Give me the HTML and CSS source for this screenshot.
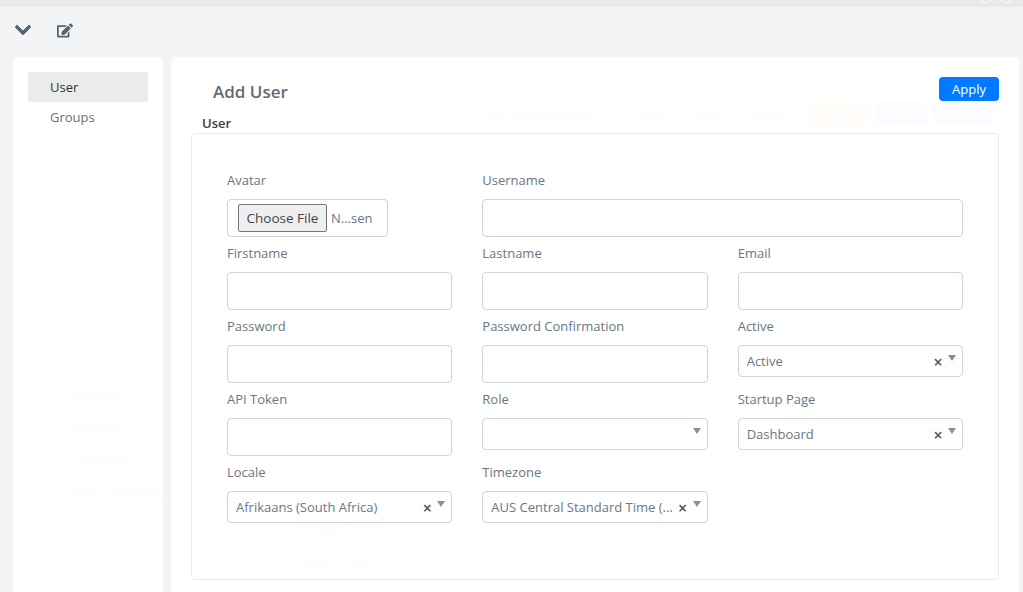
FILE: index.html
```html
<!DOCTYPE html>
<html lang="en">
<head>
<meta charset="UTF-8">
<title>Add User</title>
<link rel="stylesheet" href="styles.css">
</head>
<body>

<div class="topstrip">
	<span class="dot faint"></span>
	<span class="dot"></span>
	<span class="dot"></span>
</div>

<div class="toolbar">
	<svg class="icon-down" viewBox="0 0 448 512"><path d="M207.029 381.476L12.686 187.132c-9.373-9.373-9.373-24.569 0-33.941l22.667-22.667c9.357-9.357 24.522-9.375 33.901-.04L224 284.505l154.745-154.021c9.379-9.335 24.544-9.317 33.901.04l22.667 22.667c9.373 9.373 9.373 24.569 0 33.941L240.971 381.476c-9.373 9.372-24.569 9.372-33.942 0z"/></svg>
	<svg class="icon-edit" viewBox="0 0 576 512"><path d="M402.6 83.2l90.2 90.2c3.8 3.8 3.8 10 0 13.8L274.4 405.6l-92.8 10.3c-12.4 1.4-22.9-9.1-21.5-21.5l10.3-92.8L388.8 83.2c3.8-3.8 10-3.8 13.8 0zm162-22.9l-48.8-48.8c-15.2-15.2-39.9-15.2-55.2 0l-35.4 35.4c-3.8 3.8-3.8 10 0 13.8l90.2 90.2c3.8 3.8 10 3.8 13.8 0l35.4-35.4c15.2-15.3 15.2-40 0-55.2zM384 346.2V448H64V128h229.8c3.2 0 6.2-1.3 8.5-3.5l40-40c7.6-7.6 2.2-20.5-8.5-20.5H48C21.5 64 0 85.5 0 112v352c0 26.5 21.5 48 48 48h352c26.5 0 48-21.5 48-48V306.2c0-10.7-12.9-16-20.5-8.5l-40 40c-2.2 2.3-3.5 5.3-3.5 8.5z"/></svg>
</div>

<div class="layout">
	<div class="sidebar">
		<div class="nav-item active">User</div>
		<div class="nav-item">Groups</div>

		<!-- the page underneath shows through very faintly -->
		<div class="ghost-side">
			<div>Urgency</div>
			<div>Medium</div>
			<div>Contract</div>
			<div>Select Contract</div>
		</div>
	</div>

	<div class="main">
		<div class="ghost-bar">
			<span>Print Worklog Report</span>
			<span>Close</span>
			<span>Back</span>
			<span>Reset</span>
			<span class="ghost-btn orange">Delete</span>
			<span class="ghost-btn blue save">Save</span>
			<span class="ghost-btn blue apply">Apply</span>
		</div>

		<div class="head">
			<h1>Add User</h1>
			<button class="btn-apply">Apply</button>
		</div>
		<div class="section-title">User</div>

		<div class="card">
			<div class="form">
				<div class="field">
					<label>Avatar</label>
					<div class="file">
						<button>Choose File</button>
						<span>N...sen</span>
					</div>
				</div>
				<div class="field span2">
					<label>Username</label>
					<input class="text" type="text">
				</div>

				<div class="field">
					<label>Firstname</label>
					<input class="text" type="text">
				</div>
				<div class="field">
					<label>Lastname</label>
					<input class="text" type="text">
				</div>
				<div class="field">
					<label>Email</label>
					<input class="text" type="text">
				</div>

				<div class="field">
					<label>Password</label>
					<input class="text" type="password">
				</div>
				<div class="field">
					<label>Password Confirmation</label>
					<input class="text" type="password">
				</div>
				<div class="field">
					<label>Active</label>
					<div class="select">
						<span class="value">Active</span>
						<span class="clear">&times;</span>
						<span class="caret"></span>
					</div>
				</div>

				<div class="field">
					<label>API Token</label>
					<input class="text" type="text">
				</div>
				<div class="field">
					<label>Role</label>
					<div class="select">
						<span class="value"></span>
						<span class="caret"></span>
					</div>
				</div>
				<div class="field">
					<label>Startup Page</label>
					<div class="select">
						<span class="value">Dashboard</span>
						<span class="clear">&times;</span>
						<span class="caret"></span>
					</div>
				</div>

				<div class="field">
					<label>Locale</label>
					<div class="select">
						<span class="value">Afrikaans (South Africa)</span>
						<span class="clear">&times;</span>
						<span class="caret"></span>
					</div>
				</div>
				<div class="field">
					<label>Timezone</label>
					<div class="select">
						<span class="value">AUS Central Standard Time (...</span>
						<span class="clear">&times;</span>
						<span class="caret"></span>
					</div>
				</div>
			</div>

			<div class="ghost-card">
				<div>Requester</div>
				<div>Select User</div>
			</div>
		</div>
	</div>
</div>

</body>
</html>
```

FILE: styles.css
```css
* {
	box-sizing: border-box;
	margin: 0;
	padding: 0;
}
html, body {
	background: #f3f4f6;
	color: #5f6b76;
	height: 100%;
	overflow: hidden;
}
body {
	font-family: "Open Sans", "Noto Sans", sans-serif;
	font-size: 13px;
}

.topstrip {
	height: 7px;
	background: #e9e9e9;
	position: relative;
}
.dot {
	position: absolute;
	top: -13px;
	left: 977px;
	width: 16px;
	height: 16px;
	border-radius: 50%;
	background: #e9e9e9;
	border: 1px solid #fff;
}
.dot:nth-child(3) {
	left: 999px;
}
.dot.faint {
	top: -7px;
	left: 948px;
	width: 19px;
	height: 19px;
	background: none;
	border: 1px solid #eeeeef;
}

.toolbar {
	height: 50px;
	display: flex;
	align-items: center;
	gap: 26px;
	padding: 0 0 4px 15px;
}
.icon-down {
	width: 16px;
	height: 18px;
	fill: #56646f;
	stroke: #56646f;
	stroke-width: 24;
}
.icon-edit {
	width: 16px;
	height: 15px;
	fill: #56646f;
}

.layout {
	display: flex;
	gap: 8px;
	padding: 0 4px 0 13px;
	height: 535px;
}
.sidebar {
	width: 150px;
	background: #fff;
	border-radius: 5px 5px 0 0;
	padding: 15px;
	position: relative;
	overflow: hidden;
}
.nav-item {
	height: 30px;
	line-height: 30px;
	padding-left: 22px;
	border-radius: 3px;
	color: #6b7176;
}
.nav-item.active {
	background: #ebebeb;
	color: #333;
}
.ghost-side {
	position: absolute;
	left: 57px;
	top: 319px;
	font-size: 14px;
	white-space: nowrap;
	color: #fcfcfc;
	line-height: 33.5px;
}

.main {
	flex: 1;
	min-width: 0;
	background: #fff;
	border-radius: 5px 5px 0 0;
	padding: 20px 20px 0;
	position: relative;
}
.ghost-bar {
	position: absolute;
	top: 45px;
	left: 311px;
	display: flex;
	align-items: center;
	height: 23px;
	font-size: 12px;
	color: #fcfcfc;
	white-space: nowrap;
}
.ghost-bar span {
	margin-right: 32px;
}
.ghost-bar .ghost-btn {
	height: 23px;
	line-height: 23px;
	margin-right: 6px;
	border-radius: 4px;
	text-align: center;
	color: #fff;
}
.ghost-bar .orange {
	width: 63px;
	margin-left: -9px;
	background: #fffcf9;
}
.ghost-bar .blue {
	background: #fafcff;
}
.ghost-bar .save {
	width: 53px;
}
.ghost-bar .apply {
	width: 59px;
}

.head {
	display: flex;
	justify-content: space-between;
	align-items: flex-start;
	height: 37px;
	position: relative;
}
h1 {
	font-size: 17px;
	font-weight: 600;
	line-height: 30px;
	color: #5f6b76;
	padding-left: 22px;
}
.btn-apply {
	width: 60px;
	height: 24px;
	background: #007bff;
	color: #fff;
	border: 0;
	border-radius: 4px;
	font: 13px "Open Sans", sans-serif;
}
.section-title {
	height: 19px;
	line-height: 18px;
	padding-left: 11px;
	font-weight: 600;
	color: #3c4043;
	position: relative;
}

.card {
	height: 447px;
	border: 1px solid #e8e9eb;
	border-radius: 4px;
	padding: 36px 35px 0;
	position: relative;
}
.form {
	display: grid;
	grid-template-columns: repeat(3, minmax(0, 1fr));
	grid-auto-rows: 73px;
	column-gap: 30px;
	position: relative;
	z-index: 1;
}
.field {
	display: flex;
	flex-direction: column;
}
.span2 {
	grid-column: span 2;
}
label {
	height: 19px;
	line-height: 20px;
	margin-bottom: 10px;
	color: #6b7780;
}
.text {
	height: 38px;
	width: 100%;
	border: 1px solid #ced4da;
	border-radius: 4px;
	background: #fff;
}
.file {
	width: 161px;
	height: 38px;
	display: flex;
	align-items: center;
	gap: 4px;
	border: 1px solid #ced4da;
	border-radius: 4px;
	padding: 0 10px;
	color: #6b7780;
}
.file button {
	width: 89px;
	height: 28px;
	font: 13.5px "Open Sans", sans-serif;
	color: #444;
	background: #efefef;
	border: 1px solid #767676;
	border-radius: 2px;
}
.select {
	height: 32px;
	display: flex;
	align-items: center;
	border: 1px solid #ced4da;
	border-radius: 4px;
	padding: 0 6px 0 8px;
	background: #fff;
	color: #6b7780;
}
.value {
	flex: 1;
	min-width: 0;
	white-space: nowrap;
	overflow: hidden;
}
.clear {
	width: 14px;
	margin: 0 3px 0 0;
	font-size: 16px;
	font-weight: 600;
	line-height: 15px;
	padding-top: 3px;
	text-align: center;
	color: #4c5257;
}
.caret {
	width: 0;
	height: 0;
	margin-top: -6px;
	border: 4.5px solid transparent;
	border-top: 6px solid #8a8f94;
	border-bottom: 0;
}
.ghost-card {
	position: absolute;
	left: 106px;
	top: 376px;
	line-height: 34px;
	font-size: 14px;
	color: #fcfcfc;
}
```
